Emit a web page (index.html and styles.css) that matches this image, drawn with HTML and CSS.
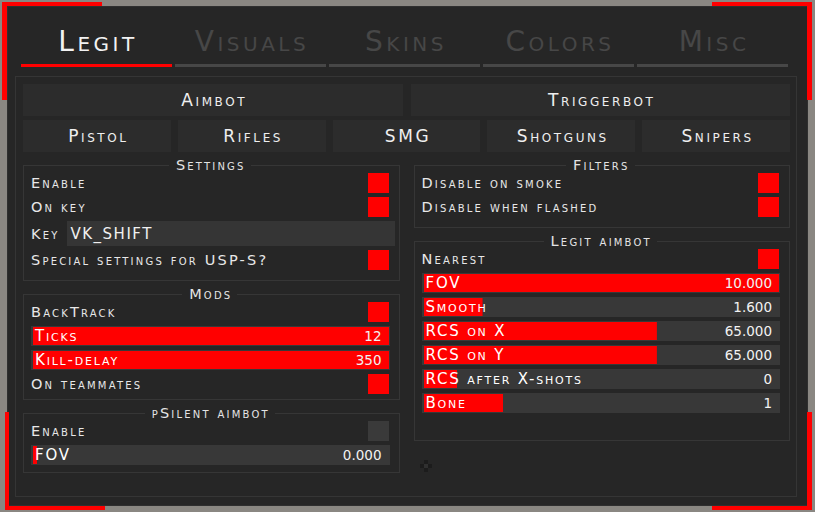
FILE: index.html
```html
<!DOCTYPE html>
<html lang="en">
<head>
  <meta charset="UTF-8">
  <title>Legit</title>
  <link rel="stylesheet" href="styles.css">
</head>
<body>
  <div class="window">
    <span class="corner corner-tl"></span>
    <span class="corner corner-tr"></span>
    <span class="corner corner-bl"></span>
    <span class="corner corner-br"></span>

    <div class="tabs">
      <div class="tab active">Legit</div>
      <div class="tab">Visuals</div>
      <div class="tab">Skins</div>
      <div class="tab">Colors</div>
      <div class="tab">Misc</div>
    </div>

    <div class="panel">
      <div class="modes">
        <div class="btn">Aimbot</div>
        <div class="btn">Triggerbot</div>
      </div>
      <div class="weapons">
        <div class="btn">Pistol</div>
        <div class="btn">Rifles</div>
        <div class="btn">SMG</div>
        <div class="btn">Shotguns</div>
        <div class="btn">Snipers</div>
      </div>

      <div class="columns">
        <div class="col">
          <div class="group">
            <div class="group-title">Settings</div>
            <div class="row"><span>Enable</span><i class="check"></i></div>
            <div class="row"><span>On key</span><i class="check"></i></div>
            <div class="row key-row"><span>Key</span><div class="key-input">VK_SHIFT</div></div>
            <div class="row"><span>Special settings for USP-S?</span><i class="check"></i></div>
          </div>

          <div class="group mods">
            <div class="group-title">Mods</div>
            <div class="row"><span>BackTrack</span><i class="check"></i></div>
            <div class="slider" style="--fill: 100%"><span class="s-label">Ticks</span><span class="s-val">12</span></div>
            <div class="slider" style="--fill: 100%"><span class="s-label">Kill-delay</span><span class="s-val">350</span></div>
            <div class="row"><span>On teammates</span><i class="check"></i></div>
          </div>

          <div class="group psilent">
            <div class="group-title">pSilent aimbot</div>
            <div class="row"><span>Enable</span><i class="check off"></i></div>
            <div class="slider" style="--fill: 4px"><span class="s-label">FOV</span><span class="s-val">0.000</span></div>
          </div>
        </div>

        <div class="col">
          <div class="group">
            <div class="group-title">Filters</div>
            <div class="row"><span>Disable on smoke</span><i class="check"></i></div>
            <div class="row"><span>Disable when flashed</span><i class="check"></i></div>
          </div>

          <div class="group legit">
            <div class="group-title">Legit aimbot</div>
            <div class="row"><span>Nearest</span><i class="check"></i></div>
            <div class="slider" style="--fill: 100%"><span class="s-label">FOV</span><span class="s-val">10.000</span></div>
            <div class="slider" style="--fill: 16.5%"><span class="s-label">Smooth</span><span class="s-val">1.600</span></div>
            <div class="slider" style="--fill: 65.6%"><span class="s-label">RCS on X</span><span class="s-val">65.000</span></div>
            <div class="slider" style="--fill: 65.6%"><span class="s-label">RCS on Y</span><span class="s-val">65.000</span></div>
            <div class="slider" style="--fill: 9.3%"><span class="s-label">RCS after X-shots</span><span class="s-val">0</span></div>
            <div class="slider" style="--fill: 22.3%"><span class="s-label">Bone</span><span class="s-val">1</span></div>
          </div>
        </div>
      </div>
    </div>

    <svg class="cursor" width="12" height="13" viewBox="0 0 12 13">
      <rect x="4" y="0" width="4" height="4" fill="#1c1c1c"/>
      <rect x="0" y="4" width="4" height="4" fill="#1c1c1c"/>
      <rect x="4" y="4" width="4" height="4" fill="#303030"/>
      <rect x="8" y="4" width="4" height="4" fill="#1c1c1c"/>
      <rect x="4" y="8" width="4" height="4" fill="#1c1c1c"/>
    </svg>
  </div>
</body>
</html>
```

FILE: styles.css
```css
* {
  box-sizing: border-box;
  margin: 0;
  padding: 0;
}
body {
  width: 815px;
  height: 512px;
  overflow: hidden;
  background: #8a8782;
  font-family: "DejaVu Sans", sans-serif;
  font-variant: small-caps;
  color: #e8e8e8;
}
.window {
  position: relative;
  width: 801px;
  height: 500px;
  margin: 6px 0 0 7px;
  background: #262626;
  border: 1px solid #2f2f2f;
}

/* red corner brackets */
.corner {
  position: absolute;
  width: 100px;
  height: 98px;
  border: 0 solid #ff0000;
}
.corner-tl {
  left: -6px;
  top: -5px;
  border-top-width: 4px;
  border-left-width: 5px;
}
.corner-tr {
  right: -5px;
  top: -5px;
  border-top-width: 4px;
  border-right-width: 5px;
}
.corner-bl {
  left: -3px;
  bottom: -5px;
  border-bottom-width: 4px;
  border-left-width: 4px;
}
.corner-br {
  right: -5px;
  bottom: -5px;
  border-bottom-width: 4px;
  border-right-width: 5px;
}

/* top tabs */
.tabs {
  display: flex;
  gap: 3px;
  margin-left: 13px;
  padding-top: 13px;
}
.tab {
  width: 151px;
  text-align: center;
  font-size: 28px;
  line-height: 44px;
  letter-spacing: 3.5px;
  text-indent: 3px;
  color: #474747;
  border-bottom: 3px solid #474747;
}
.tab.active {
  color: #f2f2f2;
  border-color: #ff0000;
}

.panel {
  width: 782px;
  height: 421px;
  margin: 9px 0 0 7px;
  padding: 7px 6px 0 7px;
  border: 1px solid #353535;
}
.modes {
  display: grid;
  grid-template-columns: 1fr 1fr;
  gap: 8px;
}
.weapons {
  display: grid;
  grid-template-columns: repeat(5, 1fr);
  gap: 7px;
  margin-top: 4px;
}
.btn {
  height: 32px;
  display: flex;
  align-items: center;
  justify-content: center;
  padding-left: 3px;
  background: #2c2c2c;
  font-size: 17px;
  letter-spacing: 2.6px;
  color: #efefef;
}

.columns {
  display: grid;
  grid-template-columns: 1fr 1fr;
  gap: 14px;
  margin-top: 13px;
  align-items: start;
}
.col {
  display: flex;
  flex-direction: column;
  gap: 13px;
}
.group {
  display: flex;
  flex-direction: column;
  gap: 4px;
  padding: 0 10px 10px 7px;
  border: 1px solid #363636;
}
.group.mods {
  padding-bottom: 5px;
}
.group.psilent {
  padding-bottom: 7px;
}
.group.legit {
  padding-bottom: 27px;
}
.group-title {
  align-self: center;
  margin: -8px 0 -3px;
  padding: 0 5px 0 7px;
  background: #262626;
  font-size: 14.5px;
  line-height: 14px;
  letter-spacing: 2.2px;
  color: #e4e4e4;
}

.row {
  height: 20px;
  display: flex;
  align-items: center;
  justify-content: space-between;
  font-size: 14.5px;
  letter-spacing: 2.2px;
}
.check {
  width: 21px;
  height: 20px;
  background: #ff0000;
}
.check.off {
  background: #3a3a3a;
}
.key-row {
  height: 25px;
}
.key-input {
  width: 328px;
  height: 25px;
  margin-right: -6px;
  padding-left: 4px;
  display: flex;
  align-items: center;
  background: #353535;
  font-variant: normal;
  font-size: 15px;
  letter-spacing: 1.5px;
  color: #f0f0f0;
}

.slider {
  height: 20px;
  margin-right: -1px;
  display: flex;
  align-items: center;
  justify-content: space-between;
  padding: 0 7px 0 2px;
  border: 1px solid #383838;
  border-left-width: 2px;
  background-color: #383838;
  background-image: linear-gradient(#ff0000, #ff0000);
  background-repeat: no-repeat;
  background-size: var(--fill) 100%;
  background-clip: padding-box;
}
.s-label {
  font-size: 15px;
  letter-spacing: 1.8px;
  color: #ffffff;
}
.s-val {
  font-size: 13.5px;
  color: #f2f2f2;
}

.cursor {
  position: absolute;
  left: 412px;
  top: 453px;
}
```
